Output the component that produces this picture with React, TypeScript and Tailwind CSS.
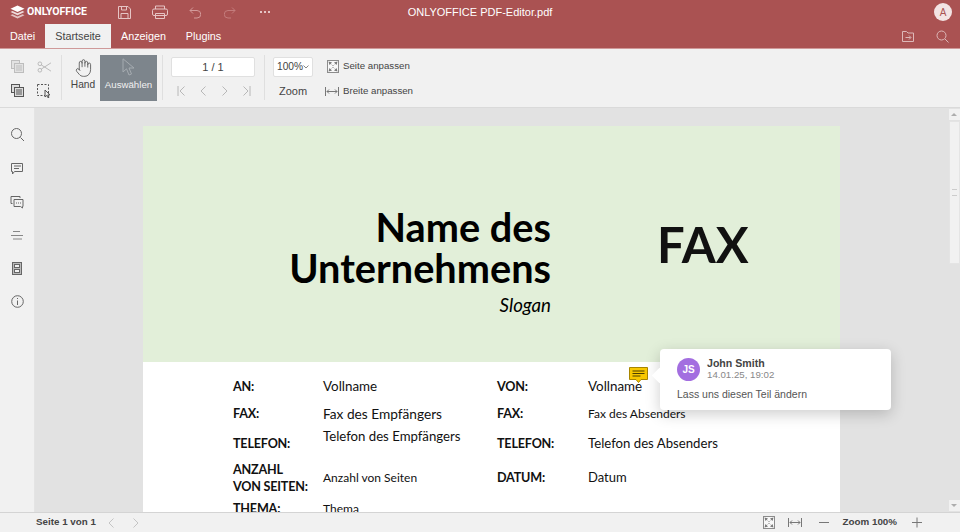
import React from "react";
import { Hand } from "lucide-react";

const S = ({ w = 20, h = 20, children, className = "" }: any) => (
  <svg width={w} height={h} viewBox={`0 0 ${w} ${h}`} fill="none" stroke="currentColor" strokeWidth={1} className={`shrink-0 ${className}`}>
    {children}
  </svg>
);

const Logo = () => (
  <svg width="15" height="14" viewBox="0 0 16 15" fill="#fff" className="shrink-0">
    <path d="M8 0.5 15.5 4 8 7.5 .5 4Z" />
    <path d="M2.600 6.400 8 8.900 13.400 6.400 15.500 7.400 8 11 .5 7.400Z" opacity=".8" />
    <path d="M2.600 9.900 8 12.400 13.400 9.900 15.500 10.900 8 14.500 .5 10.900Z" opacity=".65" />
  </svg>
);

const FitPage = ({ className = "" }: any) => (
  <svg width="12" height="13" viewBox="0 0 12 13" className={`shrink-0 ${className}`} fill="none">
    <rect x=".5" y=".5" width="11" height="12" fill="#f8f8f8" stroke="#8c8c8c" />
    <path d="M1.500 1.500 5 2.500 2.500 5ZM10.500 1.500 7 2.500 9.500 5ZM1.500 11.500 5 10.500 2.500 8ZM10.500 11.500 7 10.500 9.500 8Z" fill="#777" />
    <path d="M4.500 4.500 6 6M7.500 4.500 6 6M4.500 8.500 6 7M7.500 8.500 6 7" stroke="#bbb" />
  </svg>
);

const FitWidth = () => (
  <svg width="14" height="9" viewBox="0 0 14 9" fill="none" stroke="#777" className="shrink-0">
    <path d="M.5 0v9M13.500 0v9M2 4.500h10" />
    <path d="M4 2.500 2 4.500l2 2M10 2.500l2 2-2 2" />
  </svg>
);

const Chevron = ({ dir, bar = false, color = "#b8b8b8" }: any) => (
  <svg width="10" height="12" viewBox="0 0 10 12" fill="none" stroke={color} className="shrink-0">
    {dir === "l" ? <path d={bar ? "M2 1v10M8.500 1.500 4 6l4.500 4.500" : "M7.500 1.500 3 6l4.500 4.500"} /> : <path d={bar ? "M8 1v10M1.500 1.500 6 6l-4.500 4.500" : "M2.500 1.500 7 6l-4.500 4.500"} />}
  </svg>
);

const Divider = () => <div className="w-px h-[45px] bg-[#dfdfdf] shrink-0" />;

const rows = [
  { h: "h-[27px]", a: "AN:", b: "Vollname", c: "VON:", d: "Vollname", bc: "text-[13.400px]", dc: "text-[13.400px]" },
  { h: "h-[27px]", a: "FAX:", b: "Fax des Empfängers", c: "FAX:", d: "Fax des Absenders", bc: "text-[13.700px] mt-[-1px]", dc: "text-[12px]" },
  { h: "h-[33px]", a: "TELEFON:", b: "Telefon des Empfängers", c: "TELEFON:", d: "Telefon des Absenders", bc: "text-[13.200px] mt-[-14px]", dc: "text-[13.200px]" },
  { h: "h-[35px]", a: "ANZAHL\nVON SEITEN:", b: "Anzahl von Seiten", c: "DATUM:", d: "Datum", bc: "text-[12px]", dc: "text-[13px]" },
  { h: "h-[27px]", a: "THEMA:", b: "Thema", c: "", d: "", bc: "text-[12px]", dc: "" },
];

export default function App() {
  return (
    <div className="w-[960px] h-[532px] overflow-hidden flex flex-col bg-[#f1f1f1] text-[#444] font-['Liberation_Sans',Arial,sans-serif] text-[11px]">
      {/* title bar */}
      <div className="h-[24px] bg-[#aa5252] flex items-center relative text-white shrink-0">
        <div className="flex items-center pl-[10px] gap-[2px] w-[118px]">
          <Logo />
          <span className="font-['Roboto',sans-serif] font-bold text-[10.500px]">ONLYOFFICE</span>
        </div>
        <div className="flex items-center text-[#e6c5c5]">
          <S w={13} h={13}>
            <path d="M.5.500h9.500l2.500 2.500v9.500H.5Z" />
            <path d="M3.500 1v3h5V1M3 12.500V7.500h7v5" />
          </S>
          <S w={16} h={14} className="ml-[21px]">
            <rect x=".5" y="4" width="15" height="6.500" rx="1.500" />
            <path d="M3.500 4V1h9v3M3.500 8.500h9v5h-9z" />
          </S>
          <S w={12} h={13} className="text-[#d39a9a] ml-[21px]">
            <path d="M4 1.500 1 4.500l3 3M1 4.500h7a3.500 3.500 0 0 1 0 7.500H5" />
          </S>
          <S w={12} h={13} className="text-[#c47c7c] ml-[23px]">
            <path d="M8 1.500l3 3-3 3M11 4.500H4a3.500 3.500 0 0 0 0 7.500h3" />
          </S>
          <div className="flex gap-[2px] ml-[24px]">
            <i className="size-[2px] bg-[#e6c5c5]" />
            <i className="size-[2px] bg-[#e6c5c5]" />
            <i className="size-[2px] bg-[#e6c5c5]" />
          </div>
        </div>
        <div className="absolute left-0 right-0 text-center text-[11px] pointer-events-none">ONLYOFFICE PDF-Editor.pdf</div>
        <div className="ml-auto mr-[8px] size-[18px] rounded-full bg-[#f3e3e3] text-[#aa5252] text-[10px] flex items-center justify-center">A</div>
      </div>

      {/* tabs */}
      <div className="h-[25px] bg-[#aa5252] flex items-end text-white text-[10.800px] shrink-0 border-b border-[#cf9999]">
        <div className="h-[24px] w-[45px] flex items-center justify-center">Datei</div>
        <div className="h-[24px] w-[66px] flex items-center justify-center bg-[#f1f1f1] text-[#444]">Startseite</div>
        <div className="h-[24px] w-[65px] flex items-center justify-center">Anzeigen</div>
        <div className="h-[24px] w-[55px] flex items-center justify-center">Plugins</div>
        <div className="ml-auto flex items-center h-[24px] pr-[11px] gap-[22px] text-[#ddb8b8]">
          <S w={12} h={11}>
            <path d="M.5.500h4l1.500 1.500h5.500v8.500H.5Z" />
            <path d="M3.500 6.500h5M7 4.500l2 2-2 2" />
          </S>
          <S w={13} h={13}>
            <circle cx="5.500" cy="5.500" r="4.500" />
            <path d="m9 9 3.500 3.500" />
          </S>
        </div>
      </div>

      {/* toolbar */}
      <div className="h-[59px] flex items-start shrink-0 border-b border-[#dadada] pl-[11px] pt-[6px]">
        <div className="grid grid-cols-[16px_16px] grid-rows-[13px_13px] gap-x-[10px] gap-y-[11px] items-center w-[50px] shrink-0 pt-[5px]">
          <svg width="13" height="13" viewBox="0 0 13 13" fill="#e2e2e2" stroke="#bdbdbd"><rect x=".5" y=".5" width="8" height="8" /><rect x="3.500" y="3.500" width="9" height="9" /><path d="M5 6h6M5 8h6M5 10h6" /></svg>
          <svg width="15" height="12" viewBox="0 0 16 13" fill="none" stroke="#b5b5b5"><circle cx="3" cy="3" r="2" /><circle cx="3" cy="10" r="2" /><path d="M4.500 4.200 15 11M4.500 8.800 15 2" /></svg>
          <svg width="13" height="13" viewBox="0 0 13 13" fill="#dcdcdc" stroke="#555"><rect x=".5" y=".5" width="8" height="8" /><rect x="3.500" y="3.500" width="9" height="9" /><path d="M5 6h6M5 8h6M5 10h6" /></svg>
          <svg width="14" height="14" viewBox="0 0 14 14" fill="none" stroke="#555"><rect x=".5" y=".5" width="11" height="11" strokeDasharray="2 1.500" /><path d="M8 6v7l1.700-1.600 1.300 2.400 1-.5-1.200-2.400H13Z" fill="#f1f1f1" /></svg>
        </div>
        <Divider />
        <div className="w-[38px] flex flex-col items-center shrink-0 pl-[4px] pt-[3px]">
          <Hand width={17} height={20} preserveAspectRatio="none" strokeWidth={1.1} color="#555" className="shrink-0" />
          <span className="text-[#444] text-[10.200px] mt-[1px] leading-[12px]">Hand</span>
        </div>
        <div className="w-[57px] h-[46px] bg-[#7d858c] flex flex-col items-center pt-[3px] shrink-0">
          <svg width="14" height="19" viewBox="0 0 14 19" fill="none" stroke="#a5abb0" className="shrink-0"><path d="M1 .8V14l3.500-3.200L7 17l2.500-1-2.500-6h5Z" /></svg>
          <span className="mt-[1px] text-[#f1f1f1] text-[9.700px]">Auswählen</span>
        </div>
        <div className="w-[5px]" />
        <Divider />
        <div className="w-[101px] pl-[8px] shrink-0 pt-[2px]">
          <div className="w-[84px] h-[20px] bg-white border border-[#e0e0e0] rounded-[2px] flex items-center justify-center">1 / 1</div>
          <div className="flex gap-[12px] pl-[5px] mt-[8px]">
            <Chevron dir="l" bar />
            <Chevron dir="l" />
            <Chevron dir="r" />
            <Chevron dir="r" bar />
          </div>
        </div>
        <Divider />
        <div className="w-[60px] pl-[8px] shrink-0 pt-[2px]">
          <div className="w-[40px] h-[20px] bg-white border border-[#e0e0e0] rounded-[2px] flex items-center justify-between pl-[3px] pr-[4px] text-[10.200px]">
            <span>100%</span>
            <svg width="6" height="4" viewBox="0 0 6 4" fill="none" stroke="#888" className="shrink-0"><path d="m.5.500 2.500 2.500 2.500-2.500" /></svg>
          </div>
          <div className="w-[40px] text-center mt-[6px]">Zoom</div>
        </div>
        <div className="flex flex-col gap-[12px] text-[9.700px] pt-[5px]">
          <div className="flex items-center h-[13px] pl-[2px]">
            <FitPage /><span className="ml-[4px]">Seite anpassen</span>
          </div>
          <div className="flex items-center h-[13px]">
            <FitWidth /><span className="ml-[4px]">Breite anpassen</span>
          </div>
        </div>
      </div>

      {/* main */}
      <div className="flex-1 flex min-h-0 relative">
        <div className="w-[35px] shrink-0 bg-[#f1f1f1] border-r border-[#e4e4e4] flex flex-col items-center pt-[20px] text-[#666]">
          <S w={13} h={13}>
            <circle cx="5.500" cy="5.500" r="5" /><path d="m9.500 9.500 3.500 3.500" />
          </S>
          <S w={14} h={13} className="mt-[21px]">
            <path d="M1.500 1.500h11v8h-8l-2 2.500v-2.500h-1Z" /><path d="M4 4h7M4 6.500h5" />
          </S>
          <S w={14} h={14} className="mt-[20px]">
            <path d="M1 1.500h9v1.500M1 1.500v7h1.500" /><path d="M4 4.500h9v7h-.5v1.500l-2-1.500H4Z" /><path d="M6 8h1M8 8h1M10 8h1" />
          </S>
          <S w={14} h={12} className="mt-[21px]">
            <path d="M3 1.500h7M1 5.500h12M3 9h9" stroke="#888" />
          </S>
          <S w={10} h={13} className="mt-[20px]">
            <rect x=".5" y=".5" width="9" height="12" fill="#bbb" stroke="#666" /><rect x="2.500" y="2.500" width="5" height="3" fill="#f1f1f1" stroke="#666" /><rect x="2.500" y="7.500" width="5" height="3" fill="#f1f1f1" stroke="#666" />
          </S>
          <S w={13} h={13} className="mt-[20px]">
            <circle cx="6.500" cy="6.500" r="5.800" /><path d="M6.500 5.500v4.500M6.500 3v1" />
          </S>
        </div>

        <div className="flex-1 bg-[#e2e2e2] overflow-hidden pl-[108px] pt-[18px]">
          <div className="w-[697px] h-[500px] bg-white font-['Lato',sans-serif] text-black">
            <div className="h-[236px] bg-[#e2efd9] flex pt-[80px]">
              <div className="w-[408px] text-right shrink-0">
                <div className="text-[39.700px] leading-[41px] font-bold">Name des<br />Unternehmens</div>
                <div className="text-[18.700px] leading-[22px] italic mt-[6px]">Slogan</div>
              </div>
              <div className="ml-[106px] text-[49px] leading-[56px] font-bold mt-[10px] text-[#111]">FAX</div>
            </div>
            <div className="pl-[90px] pt-[11px]">
              {rows.map((r, i) => (
                <div key={i} className={`grid grid-cols-[90px_174px_91px_1fr] ${r.h} items-center text-[13px] leading-[17px] text-[#111]`}>
                  <div className="font-bold text-[12.600px] tracking-[-0.2px] whitespace-pre-line">{r.a}</div>
                  <div className={r.bc}>{r.b}</div>
                  <div className="font-bold text-[12.600px] tracking-[-0.2px]">{r.c}</div>
                  <div className={r.dc}>{r.d}</div>
                </div>
              ))}
            </div>
          </div>
        </div>

        <div className="w-[12px] shrink-0 bg-[#e2e2e2] flex flex-col items-center pt-[1px]">
          <div className="w-[11px] h-[11px] bg-[#f1f1f1] flex items-center justify-center"><i className="border-x-[3px] border-b-[3px] border-x-transparent border-b-[#adadad]" /></div>
          <div className="w-[11px] h-[143px] bg-[#f1f1f1] border border-[#e4e4e4] mt-[1px] flex items-center justify-center">
            <div className="w-[5px] h-[7px] border-y border-[#ccc]" />
          </div>
          <div className="mt-auto w-[11px] h-[11px] mb-[1px] bg-[#f1f1f1] flex items-center justify-center"><i className="border-x-[3px] border-t-[3px] border-x-transparent border-t-[#adadad]" /></div>
        </div>

        {/* comment marker */}
        <svg width="19" height="17" viewBox="0 0 19 17" className="absolute left-[629px] top-[259px]">
          <path d="M.5.500h18v12h-6.500l-2.500 3-2.500-3H.5Z" fill="#f8c800" stroke="#a88600" />
          <path d="M3.500 4h12M3.500 6.500h12M3.500 9h8" stroke="#4d4000" />
        </svg>

        {/* comment popover */}
        <div className="absolute left-[660px] top-[241px] w-[231px] h-[61px] bg-white rounded-[4px] shadow-[0_4px_15px_rgba(0,0,0,0.2)] pl-[17px] pt-[8px]">
          <div className="absolute left-[-6px] top-[21px] size-[11px] rotate-45 bg-white" />
          <div className="flex items-center gap-[7px] relative">
            <div className="size-[23px] rounded-full bg-[#a36ee0] text-white text-[10px] font-bold flex items-center justify-center">JS</div>
            <div className="leading-[12px]">
              <div className="font-bold text-[10.600px] text-[#444]">John Smith</div>
              <div className="text-[9.700px] text-[#888]">14.01.25, 19:02</div>
            </div>
          </div>
          <div className="mt-[6px] text-[10.500px] text-[#555] leading-[14px] relative">Lass uns diesen Teil ändern</div>
        </div>
      </div>

      {/* status bar */}
      <div className="h-[20px] shrink-0 border-t border-[#d4d4d4] bg-[#f1f1f1] flex items-center text-[9.800px]">
        <span className="ml-[36px] font-bold text-[#444]">Seite 1 von 1</span>
        <div className="flex gap-[15px] ml-[10px]">
          <Chevron dir="l" color="#c4c4c4" />
          <Chevron dir="r" color="#c4c4c4" />
        </div>
        <div className="ml-auto flex items-center pr-[38px]">
          <FitPage className="mr-[13px]" />
          <FitWidth />
          <svg width="10" height="11" viewBox="0 0 10 11" stroke="#777" className="ml-[17px] shrink-0"><path d="M0 5.500h10" /></svg>
          <span className="ml-[14px] font-bold text-[#444]">Zoom 100%</span>
          <svg width="10" height="11" viewBox="0 0 10 11" stroke="#777" className="ml-[15px] shrink-0"><path d="M0 5.500h10M5 .5v10" /></svg>
        </div>
      </div>
    </div>
  );
}
